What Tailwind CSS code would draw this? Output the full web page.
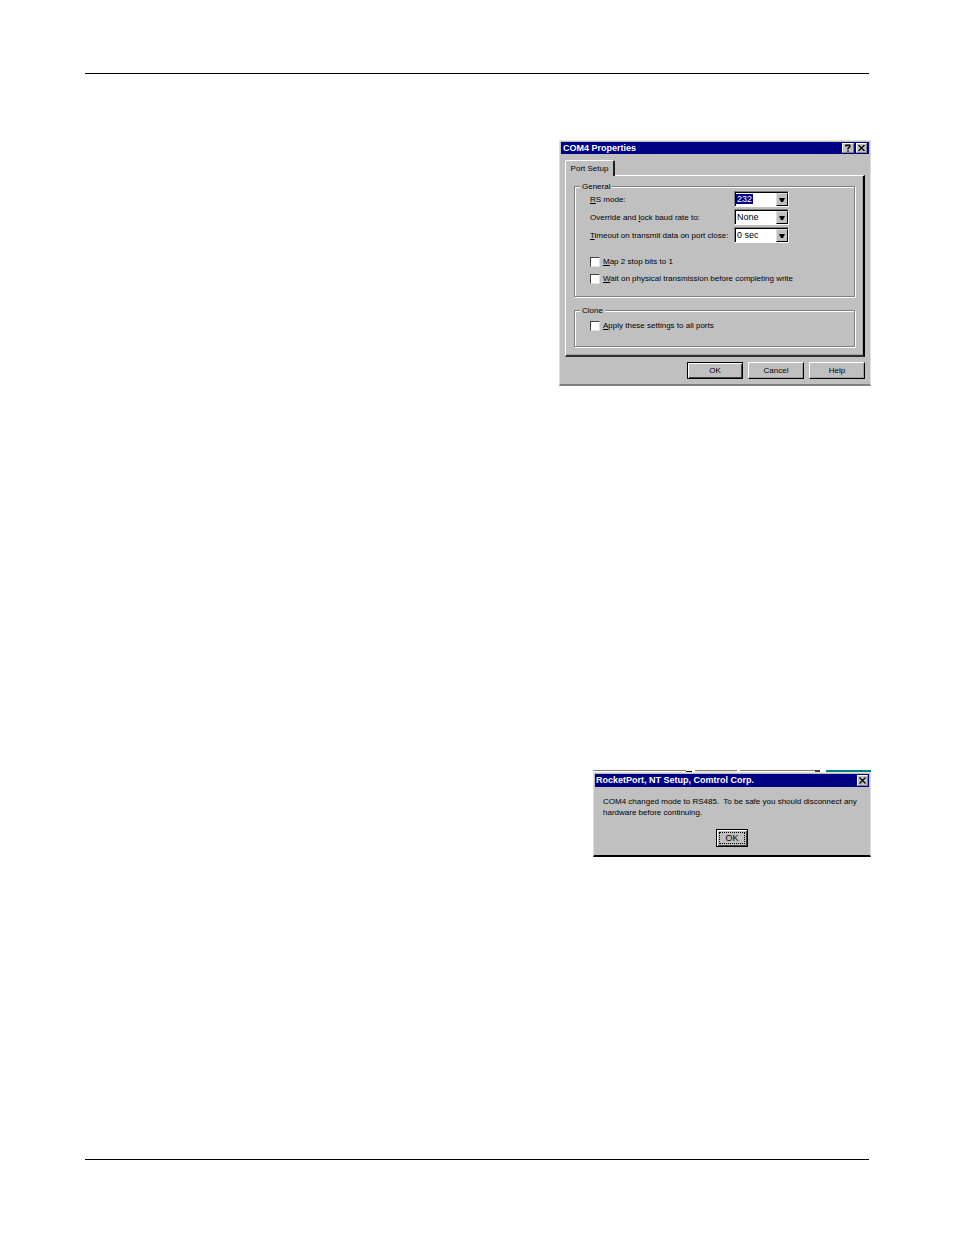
<!DOCTYPE html>
<html lang="en">
<head>
<meta charset="utf-8">
<meta name="viewport" content="width=device-width, initial-scale=1">
<title>Port configuration</title>
<script src="https://cdn.jsdelivr.net/npm/@tailwindcss/browser@4"></script>
</head>
<body class="bg-white text-black font-['Liberation_Sans',Arial,sans-serif] text-[8px] leading-[11px]">
<main class="flex min-h-screen flex-col items-end pl-[85px] pr-[85px] pt-[73px] pb-[75px]">
  <hr class="w-full border-0 border-t border-black">

  <section aria-labelledby="t1" class="-mr-[2px] mt-[66px] w-full max-w-[312px] border border-b-2 border-[#dfdfdf] border-b-[#808080] bg-[#c0c0c0] p-px">
    <header class="flex h-[12px] items-center bg-[#000084] pl-[2px] pr-[2px] text-white">
      <h1 id="t1" class="flex-1 text-[9px] font-bold">COM4 Properties</h1>
      <button aria-label="Help" class="flex h-[10px] w-[12px] items-center justify-center border border-white border-b-[#808080] border-r-[#808080] bg-[#c0c0c0]">
        <svg width="6" height="8" viewBox="0 0 6 8" fill="none" stroke="#000" stroke-width="1.5"><path d="M1 2.5V1.2H4.7V3L3 4.3V5.2M3 6.2V7.7"/></svg>
      </button>
      <button aria-label="Close" class="ml-[2px] flex h-[10px] w-[11px] items-center justify-center border border-white border-b-[#808080] border-r-[#808080] bg-[#c0c0c0]">
        <svg width="7" height="6" viewBox="0 0 7 6" stroke="#000" stroke-width="1.3"><path d="M.5 0L6.5 6M6.5 0L.5 6"/></svg>
      </button>
    </header>
    <div class="px-1 pt-[6px] pb-[4px]">
      <div role="tablist" class="flex">
        <button role="tab" aria-selected="true" class="relative z-10 -mb-px h-[16px] w-[50px] rounded-t-[2px] border border-r-2 border-b-0 border-white border-r-[#202020] bg-[#c0c0c0]">Port Setup</button>
      </div>
      <div role="tabpanel" class="flex flex-col gap-[9px] border border-r-2 border-b-2 border-white border-r-black border-b-[#303030] px-2 pt-[6px] pb-[8px] shadow-[inset_-1px_-1px_0_#a0a0a0]">
        <fieldset class="border border-[#808080] pl-[15px] pb-[12px] shadow-[1px_1px_0_#fff,inset_1px_1px_0_#fff]">
          <legend class="-ml-[10px] bg-[#c0c0c0] px-[2px] leading-[9px]">General</legend>
          <div class="grid grid-cols-[144px_55px] items-center gap-y-[2px]">
            <label for="rs"><u>R</u>S mode:</label>
            <div class="relative h-[16px] border border-[#808080] border-r-white border-b-white bg-white">
              <select id="rs" class="block h-[14px] w-full appearance-none border border-black p-0 opacity-0"><option>232</option><option>422</option><option>485</option></select>
              <span class="pointer-events-none absolute inset-0 flex border-t border-l border-black"><span class="my-px h-[10px] bg-[#000084] px-px leading-[11px] text-[9px] text-white">232</span></span>
              <span class="pointer-events-none absolute right-0 top-px flex h-[13px] w-[12px] items-center justify-center border border-[#dfdfdf] border-b-black border-r-black bg-[#c0c0c0]"><svg width="6" height="4" viewBox="0 0 6 4"><path d="M0 0H6L4 4H2Z"/></svg></span>
            </div>
            <label for="baud">Override and <u>l</u>ock baud rate to:</label>
            <div class="relative h-[16px] border border-[#808080] border-r-white border-b-white bg-white">
              <select id="baud" class="block h-[14px] w-full appearance-none border-t border-l border-black pl-px pb-px text-[9px] leading-[12px]"><option>None</option><option>9600</option></select>
              <span class="pointer-events-none absolute right-0 top-px flex h-[13px] w-[12px] items-center justify-center border border-[#dfdfdf] border-b-black border-r-black bg-[#c0c0c0]"><svg width="6" height="4" viewBox="0 0 6 4"><path d="M0 0H6L4 4H2Z"/></svg></span>
            </div>
            <label for="tmo" class="whitespace-nowrap"><u>T</u>imeout on transmit data on port close:</label>
            <div class="relative h-[16px] border border-[#808080] border-r-white border-b-white bg-white">
              <select id="tmo" class="block h-[14px] w-full appearance-none border-t border-l border-black pl-px pb-px text-[9px] leading-[12px]"><option>0 sec</option><option>1 sec</option></select>
              <span class="pointer-events-none absolute right-0 top-px flex h-[13px] w-[12px] items-center justify-center border border-[#dfdfdf] border-b-black border-r-black bg-[#c0c0c0]"><svg width="6" height="4" viewBox="0 0 6 4"><path d="M0 0H6L4 4H2Z"/></svg></span>
            </div>
          </div>
          <div class="mt-[14px] flex flex-col gap-[7px] leading-[10px]">
            <label class="flex h-[10px] items-center gap-[3px]"><input type="checkbox" class="h-[10px] w-[10px] appearance-none border border-[#404040] border-r-[#dfdfdf] border-b-[#dfdfdf] bg-white"><span><u>M</u>ap 2 stop bits to 1</span></label>
            <label class="flex h-[10px] items-center gap-[3px]"><input type="checkbox" class="h-[10px] w-[10px] appearance-none border border-[#404040] border-r-[#dfdfdf] border-b-[#dfdfdf] bg-white"><span><u>W</u>ait on physical transmission before completing write</span></label>
          </div>
        </fieldset>
        <fieldset class="border border-[#808080] pl-[15px] pt-[6px] pb-[15px] shadow-[1px_1px_0_#fff,inset_1px_1px_0_#fff]">
          <legend class="-ml-[10px] bg-[#c0c0c0] px-[2px] leading-[9px]">Clone</legend>
          <label class="flex h-[10px] items-center gap-[3px] leading-[10px]"><input type="checkbox" class="h-[10px] w-[10px] appearance-none border border-[#404040] border-r-[#dfdfdf] border-b-[#dfdfdf] bg-white"><span><u>A</u>pply these settings to all ports</span></label>
        </fieldset>
      </div>
      <div class="mt-[5px] flex justify-end gap-[5px]">
        <button class="h-[17px] w-[56px] border border-black shadow-[inset_1px_1px_0_#fff,inset_-1px_-1px_0_#404040]">OK</button>
        <button class="h-[17px] w-[56px] border border-white border-r-black border-b-black shadow-[inset_-1px_-1px_0_#a0a0a0]">Cancel</button>
        <button class="h-[17px] w-[56px] border border-white border-r-black border-b-black shadow-[inset_-1px_-1px_0_#a0a0a0]">Help</button>
      </div>
    </div>
  </section>

  <section aria-labelledby="t2" class="-mr-[2px] mt-[384px] w-full max-w-[278px]">
    <div aria-hidden="true" class="flex h-[2px]">
      <div class="flex-1 border-t border-[#808080]"></div>
      <div class="mr-[3px] w-[6px] border-b border-black"></div>
      <div class="mr-[3px] w-[42px] border-t border-[#808080] bg-[#e8e8e8]"></div>
      <div class="w-[75px] border-t border-[#808080]"></div>
      <div class="mr-[6px] w-[5px] bg-[#404040]"></div>
      <div class="w-[45px] bg-[#008080]"></div>
    </div>
    <div class="border border-b-2 border-[#dfdfdf] border-b-black bg-[#c0c0c0] p-px">
      <header class="flex h-[13px] items-center bg-[#000084] px-[1px] text-white">
        <h2 id="t2" class="flex-1 text-[9px] font-bold">RocketPort, NT Setup, Comtrol Corp.</h2>
        <button aria-label="Close" class="flex h-[11px] w-[11px] items-center justify-center border border-white border-b-[#808080] border-r-[#808080] bg-[#c0c0c0]">
          <svg width="7" height="7" viewBox="0 0 7 7" stroke="#000" stroke-width="1.3"><path d="M.5 .5L6.5 6.5M6.5 .5L.5 6.5"/></svg>
        </button>
      </header>
      <div class="flex flex-col items-center px-2 pt-[9px] pb-[7px]">
        <p class="w-full whitespace-nowrap leading-[11px]">COM4 changed mode to RS485.&nbsp; To be safe you should disconnect any<br>hardware before continuing.</p>
        <button class="mt-[11px] h-[18px] w-[32px] border border-black p-[2px] shadow-[inset_1px_1px_0_#fff,inset_-1px_-1px_0_#404040]"><span class="flex h-full items-center justify-center border border-dotted border-black text-[9px]">OK</span></button>
      </div>
    </div>
  </section>

  <hr class="mt-auto w-full border-0 border-t border-black">
</main>
</body>
</html>
